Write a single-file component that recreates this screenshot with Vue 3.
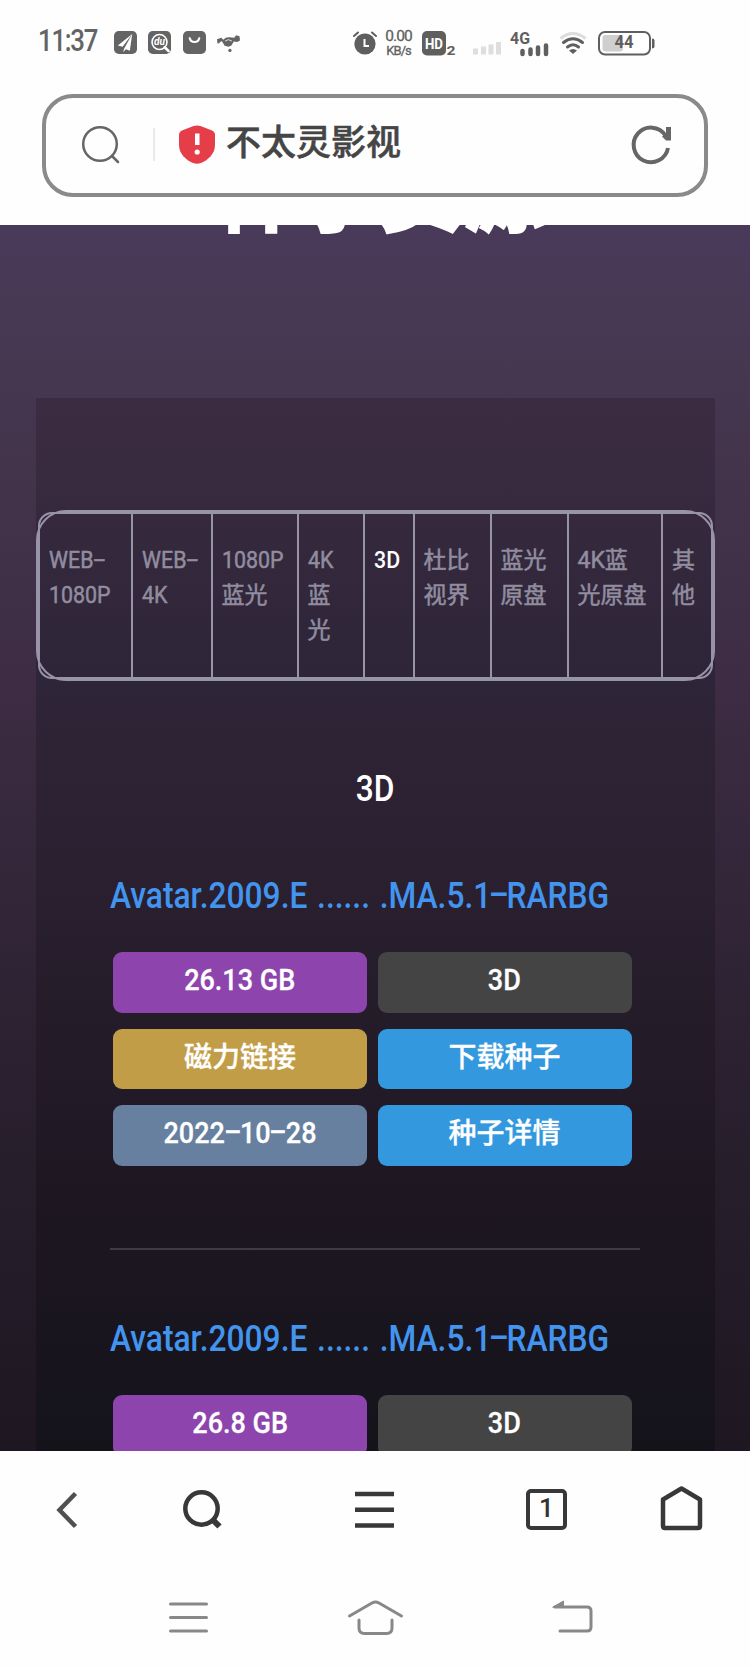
<template>
    <div class="phone">
        <header class="status-bar">
            <span class="time"><b>11:37</b></span>
            <svg class="app-icon" viewBox="0 0 24 24">
                <rect width="24" height="24" rx="5" fill="#646464" />
                <path d="M19 3L4 15l5 1.500zM19 3l-8.500 15.500L9.500 22l3-3 4 1.500z" fill="#fff" />
            </svg>
            <svg class="app-icon" viewBox="0 0 24 24">
                <rect width="24" height="24" rx="5" fill="#646464" />
                <circle cx="12" cy="11.500" r="7.800" fill="none" stroke="#fff" stroke-width="1.700" />
                <path d="M17.500 17l4 4" stroke="#fff" stroke-width="2.800" stroke-linecap="round" />
                <text x="12" y="15" text-anchor="middle" class="du">du</text>
            </svg>
            <svg class="app-icon" viewBox="0 0 24 24">
                <rect width="24" height="24" rx="5" fill="#646464" />
                <path d="M7 7.500c1.500 5.300 8.500 5.300 10 0" fill="none" stroke="#fff" stroke-width="2.200" stroke-linecap="round" />
            </svg>
            <svg class="app-icon" viewBox="0 0 24 24">
                <path d="M0 8.500l4.500-1.500 2 2q3-3 6.500-2.500l5 .5 2-2.500 3.500 1 .5 4.500-3 1.500-3.500-.5-2.500 4-3 1.500-4-1-3-5-3.500 2.500H.500z" fill="#646464" />
                <path d="M8.500 10.500q3-3 7 0" fill="none" stroke="#e4e4e4" stroke-width="1" />
                <circle cx="13.500" cy="20.300" r="1.700" fill="#646464" />
            </svg>
            <svg class="alarm" viewBox="0 0 24 24">
                <circle cx="12" cy="13" r="10.600" fill="#5f5f5f" />
                <path d="M1 5l4-3.500M23 5l-4-3.500" stroke="#5f5f5f" stroke-width="2" stroke-linecap="round" />
                <path d="M11.500 8v7H16" fill="none" stroke="#fff" stroke-width="2" />
            </svg>
            <div class="speed">
                <span>0.00</span>
                <span>KB/s</span>
            </div>
            <svg class="hd" viewBox="0 0 34 25">
                <rect width="24" height="24.500" rx="5" fill="#5f5f5f" />
                <text x="12" y="17.500" text-anchor="middle" textLength="18" lengthAdjust="spacingAndGlyphs" class="hd-text">HD</text>
                <text x="24.500" y="24" textLength="9" lengthAdjust="spacingAndGlyphs" class="hd-two">2</text>
            </svg>
            <svg class="sim1" viewBox="0 0 28 13">
                <path d="M0 6.500h5v6H0zM8 4.500h5v8H8zM15.500 2.500h5v10h-5zM23 0h5v12.500h-5z" fill="#dedede" />
            </svg>
            <svg class="sim2" viewBox="0 0 39 25">
                <text x="0" y="12.500" textLength="20" lengthAdjust="spacingAndGlyphs" class="net">4G</text>
                <path d="M12.500 20v3M20.500 18.500V23M28 16.500V23M36 14.500V23" stroke="#5f5f5f" stroke-width="4.500" stroke-linecap="round" />
            </svg>
            <svg class="wifi" viewBox="0 0 28 23">
                <path d="M1.500 6.500Q14-3.500 26.500 6.500" fill="none" stroke="#dcdcdc" stroke-width="3" />
                <path d="M4.500 10.500q9.500-7.500 19 0M8.500 15q5.500-4.500 11 0" fill="none" stroke="#5f5f5f" stroke-width="3" stroke-linecap="round" />
                <path d="M10 18.500q4-3 8 0l-4 3.500z" fill="#5f5f5f" />
            </svg>
            <svg class="battery" viewBox="0 0 58 25">
                <rect x="1" y="1" width="51" height="22.500" rx="6" fill="#fff" stroke="#5f5f5f" stroke-width="2" />
                <rect x="4.500" y="4" width="20.500" height="16.500" rx="3" fill="#cfcfcf" />
                <path d="M54 7.500q2.500 0 2.500 2v6q0 2-2.500 2z" fill="#5f5f5f" />
                <text x="26" y="16.500" text-anchor="middle" textLength="19" lengthAdjust="spacingAndGlyphs" class="level">44</text>
            </svg>
        </header>

        <div class="address-bar">
            <svg class="search" viewBox="0 0 38 38">
                <circle cx="18" cy="18" r="16.800" />
                <path d="M30 30l6 6" />
            </svg>
            <span class="separator"></span>
            <svg class="shield" viewBox="0 0 36 39">
                <path d="M14.500 1Q18 0 21.500 1L33 5.500Q36 7 36 10v10c0 9-7 15-14 18q-4 1.500-8 0C7 35 0 29 0 20V10Q0 7 3 5.500z" fill="#e63e48" />
                <path d="M16 8.500h4.500v11.500H16z" fill="#fff" />
                <circle cx="18.200" cy="27" r="2.600" fill="#fff" />
            </svg>
            <span class="site">不太灵影视</span>
            <svg class="reload" viewBox="0 0 39 40">
                <path d="M36 23A17.300 17.300 0 1 1 33.500 10.500" fill="none" stroke="#666" stroke-width="4" />
                <path d="M34 2h5v13.500h-5l-4-4 4-3z" fill="#666" />
            </svg>
        </div>

        <main class="page">
            <h1>种子资源</h1>
            <section class="panel">
                <div class="tabs">
                    <ul>
                        <li v-for="tab in tabs" :key="tab.id" :class="{ active: tab.id === current }">
                            <span v-for="line in tab.lines" :key="line"><DashText :text="line" /></span>
                        </li>
                    </ul>
                </div>
                <h2><DashText text="3D" /></h2>
                <article v-for="item in torrents" :key="item.id" class="torrent">
                    <a class="name"><DashText :text="item.name" /></a>
                    <div class="buttons">
                        <span v-for="button in item.buttons" :key="button.text" :class="['button', button.kind]">
                            <DashText :text="button.text" />
                        </span>
                    </div>
                    <hr>
                </article>
            </section>
        </main>

        <nav class="browser-nav">
            <svg class="back" viewBox="0 0 22 38"><path d="M19.500 2.500L3.500 19l16 16.500" /></svg>
            <svg class="find" viewBox="0 0 40 40">
                <circle cx="18.500" cy="18.500" r="16.200" />
                <path d="M30.500 30.500l6 6" stroke-width="6" />
            </svg>
            <svg class="menu" viewBox="0 0 39 36"><path d="M0 2h39M0 17.800h39M0 33.500h39" /></svg>
            <span class="tab-count">1</span>
            <svg class="home" viewBox="0 0 41 44"><path d="M2 13.500L20.500 2.500 39 13.500V40q0 2-2 2H4q-2 0-2-2z" /></svg>
        </nav>
        <footer class="system-nav">
            <svg class="recent" viewBox="0 0 39 31"><path d="M1.500 2h36M1.500 15.500h36M1.500 29h36" /></svg>
            <svg class="launcher" viewBox="0 0 55 35"><path d="M1.500 16L24 3q3.500-2 7 0l22.500 13M11 20v8q0 5.500 5.500 5.500h22q5.500 0 5.500-5.500v-8" /></svg>
            <svg class="return" viewBox="0 0 41 34">
                <path d="M3 7h32q4 0 4 4v16q0 4-4 4H8" />
                <path d="M1 7L11.500 1v6z" class="tip" />
            </svg>
        </footer>
    </div>
</template>

<script setup>
import { h } from 'vue';

// hyphens are drawn wide, like in the phone's system font
const DashText = ({ text }) => h('span', { class: ['fit', { latin: /^[\x20-\x7e]+$/.test(text) }] }, text.split(/(-)/).map((part) => (
    part === '-' ? h('span', { class: 'dash' }, [h('i', part)]) : part
)));
DashText.props = ['text'];

const current = 'd3';

const tabs = [
    { id: 'web1080', lines: ['WEB-', '1080P'] },
    { id: 'web4k', lines: ['WEB-', '4K'] },
    { id: 'blu1080', lines: ['1080P', '蓝光'] },
    { id: 'blu4k', lines: ['4K', '蓝', '光'] },
    { id: 'd3', lines: ['3D'] },
    { id: 'dolby', lines: ['杜比', '视界'] },
    { id: 'disc', lines: ['蓝光', '原盘'] },
    { id: 'disc4k', lines: ['4K蓝', '光原盘'] },
    { id: 'other', lines: ['其', '他'] },
];

const torrents = [
    {
        id: 1,
        name: 'Avatar.2009.E ...... .MA.5.1-RARBG',
        buttons: [
            { text: '26.13 GB', kind: 'size' },
            { text: '3D', kind: 'type' },
            { text: '磁力链接', kind: 'magnet' },
            { text: '下载种子', kind: 'blue' },
            { text: '2022-10-28', kind: 'date' },
            { text: '种子详情', kind: 'blue' },
        ],
    },
    {
        id: 2,
        name: 'Avatar.2009.E ...... .MA.5.1-RARBG',
        buttons: [
            { text: '26.8 GB', kind: 'size' },
            { text: '3D', kind: 'type' },
        ],
    },
];
</script>

<style>
body {
    margin: 0;
}

.fit {
    display: inline-block;
    white-space: pre;
}

.dash {
    display: inline-block;
    width: 0.56em;
    text-align: center;
}

.dash i {
    display: inline-block;
    font-style: normal;
    transform: translateY(-0.060em) scaleX(1.9);
}
</style>

<style scoped>
.phone {
    display: flex;
    flex-direction: column;
    width: 750px;
    height: 1667px;
    overflow: hidden;
    background: #fefefe;
    font-family: Roboto, "Noto Sans CJK SC", sans-serif;
}

svg {
    display: block;
    flex: none;
    overflow: visible;
}

svg text {
    font-weight: bold;
    fill: #5f5f5f;
}

.status-bar {
    display: flex;
    align-items: flex-start;
    box-sizing: border-box;
    height: 94px;
    padding: 31px 0 0 38px;
    flex: none;
}

.time {
    width: 76px;
    margin-top: -8px;
    font-size: 31px;
    line-height: 36px;
    color: #646464;
}

.time b {
    display: inline-block;
    font-weight: 500;
    transform: scaleX(0.83);
    transform-origin: left;
    letter-spacing: -1.500px;
}

.app-icon {
    width: 23px;
    height: 23px;
    margin-right: 11.400px;
}

.status-bar svg .du {
    font-size: 10.500px;
    font-style: italic;
    fill: #fff;
}

.alarm {
    width: 24px;
    height: 24px;
    margin-left: 101px;
}

.speed {
    display: flex;
    flex-direction: column;
    align-items: center;
    width: 30px;
    margin: -4px 0 0 7px;
    color: #5f5f5f;
    line-height: 18px;
    letter-spacing: -0.900px;
    -webkit-text-stroke: 0.300px #5f5f5f;
}

.speed span:first-child {
    font-size: 15.500px;
}

.speed span:last-child {
    margin-top: -3px;
    font-size: 13px;
}

.hd {
    width: 34px;
    height: 25px;
    margin-left: 8px;
}

.status-bar .hd-text {
    font-size: 15px;
    fill: #fff;
}

.hd-two {
    font-size: 13px;
}

.sim1 {
    width: 28px;
    height: 13px;
    margin: 11px 0 0 17px;
}

.sim2 {
    width: 39px;
    height: 25px;
    margin-left: 9px;
}

.net {
    font-size: 16px;
}

.wifi {
    width: 28px;
    height: 23px;
    margin: 1px 0 0 10px;
}

.battery {
    width: 58px;
    height: 25px;
    margin-left: 11px;
}

.level {
    font-size: 18px;
}

.address-bar {
    display: flex;
    align-items: center;
    box-sizing: border-box;
    width: 666px;
    height: 103px;
    margin-left: 42px;
    padding: 0 33px 2px 37px;
    border: 4.500px solid #8a8a8a;
    border-radius: 31px;
    flex: none;
}

.search {
    width: 38px;
    height: 38px;
    margin-left: -1px;
    fill: none;
    stroke: #666;
    stroke-width: 2.500;
    stroke-linecap: round;
}

.separator {
    width: 2px;
    height: 33px;
    margin: 0 24px 0 33px;
    background: #eaeaea;
}

.shield {
    width: 36px;
    height: 39px;
}

.site {
    margin: -1px auto 0 11px;
    color: #454545;
    font-size: 35px;
    font-weight: 500;
    line-height: 40px;
    -webkit-text-stroke: 0.500px #454545;
}

.reload {
    width: 39px;
    height: 40px;
}

.page {
    box-sizing: border-box;
    height: 1226px;
    margin-top: 28px;
    overflow: hidden;
    flex: none;
    background: linear-gradient(#4a3a5a, #45374f 13%, #3d2c43 38%, #2c2232 65%, #1e1721);
}

.page h1 {
    height: 90px;
    margin: -73px 0 156px;
    padding-left: 10px;
    color: #fff;
    font-size: 83px;
    line-height: 90px;
    text-align: center;
    -webkit-text-stroke: 2px #fff;
}

.panel {
    box-sizing: border-box;
    height: 1060px;
    margin: 0 35.500px;
    padding-top: 112px;
    background: linear-gradient(#3c2c42, #30263a 22%, #2a2030 45%, #1e1722 75%, #14131a);
}

.tabs {
    box-sizing: border-box;
    height: 171px;
    border: 2px solid #9894a8;
    border-radius: 30px;
}

.tabs ul {
    display: grid;
    grid-template-columns: 93.500px 79.500px 86px 66px 50px 77px 77px 94.500px 1fr;
    box-sizing: border-box;
    height: 167px;
    margin: 0;
    padding: 0;
    border: 2px solid #9894a8;
    border-radius: 14px;
    list-style: none;
}

.tabs li {
    box-sizing: border-box;
    padding: 29px 0 0 9px;
    border-right: 2px solid #9894a8;
    color: #918d9f;
    font-size: 23px;
    line-height: 35px;
    white-space: nowrap;
    -webkit-text-stroke: 0.500px #918d9f;
}

.tabs li:last-child {
    border-right: 0;
}

.tabs li > span {
    display: block;
}

.tabs .latin {
    transform: scaleX(0.93);
    transform-origin: left;
}

.tabs .active {
    color: #fff;
    font-weight: 500;
    -webkit-text-stroke: 0;
}

.panel h2 {
    height: 50px;
    margin: 83px 0 0;
    color: #fff;
    font-size: 36px;
    font-weight: 500;
    line-height: 50px;
    text-align: center;
}

.panel h2 .latin {
    transform: scaleX(0.88);
}

.torrent {
    box-sizing: border-box;
    height: 443px;
    padding: 56px 75px 0 74.500px;
}

.name {
    display: block;
    height: 52px;
    color: #4294ee;
    font-size: 36px;
    font-weight: 500;
    line-height: 52px;
    word-spacing: 2px;
}

.name .fit {
    transform: scaleX(0.882);
    transform-origin: left;
}

.name :deep(.dash) {
    width: 0.480em;
}

.buttons {
    display: grid;
    grid-template-columns: 254px 254px;
    grid-auto-rows: 60.500px;
    gap: 16px 10.500px;
    margin: 30px 0 0 3px;
}

.button {
    border-radius: 9px;
    color: #fff;
    font-size: 28px;
    font-weight: 500;
    line-height: 58px;
    text-align: center;
    -webkit-text-stroke: 0.300px #fff;
}

.button .latin {
    font-size: 30px;
    line-height: 55px;
    transform: scaleX(0.9);
    vertical-align: top;
}

.size {
    background: #8e44ad;
}

.type {
    background: #444;
}

.magnet {
    background: #c29d47;
}

.blue {
    background: #3498de;
}

.date {
    background: #67809f;
}

.torrent hr {
    height: 2px;
    margin: 82px 0 0;
    border: 0;
    background: #3f3b45;
}

.browser-nav {
    display: flex;
    align-items: center;
    height: 117px;
    padding-left: 55.500px;
    flex: none;
    fill: none;
    stroke: #383838;
    stroke-width: 4.500;
}

.back {
    width: 22px;
    height: 38px;
    stroke: #505050;
}

.find {
    width: 40px;
    height: 40px;
    margin-left: 105px;
}

.menu {
    width: 39px;
    height: 36px;
    margin-left: 132px;
}

.tab-count {
    box-sizing: border-box;
    width: 41px;
    height: 41px;
    margin-left: 132.500px;
    border: 4.500px solid #383838;
    border-radius: 5px;
    color: #333;
    font-size: 26px;
    font-weight: 500;
    line-height: 31px;
    text-align: center;
}

.home {
    width: 41px;
    height: 44px;
    margin: -3px 0 0 94px;
    stroke-linejoin: round;
}

.system-nav {
    display: flex;
    align-items: center;
    height: 98px;
    padding-left: 169px;
    flex: none;
    fill: none;
    stroke: #888;
    stroke-width: 3;
    stroke-linecap: round;
}

.recent {
    width: 39px;
    height: 31px;
}

.launcher {
    width: 55px;
    height: 35px;
    margin-left: 140px;
}

.return {
    width: 41px;
    height: 34px;
    margin-left: 149px;
}

.tip {
    fill: #888;
    stroke-width: 1;
}
</style>
